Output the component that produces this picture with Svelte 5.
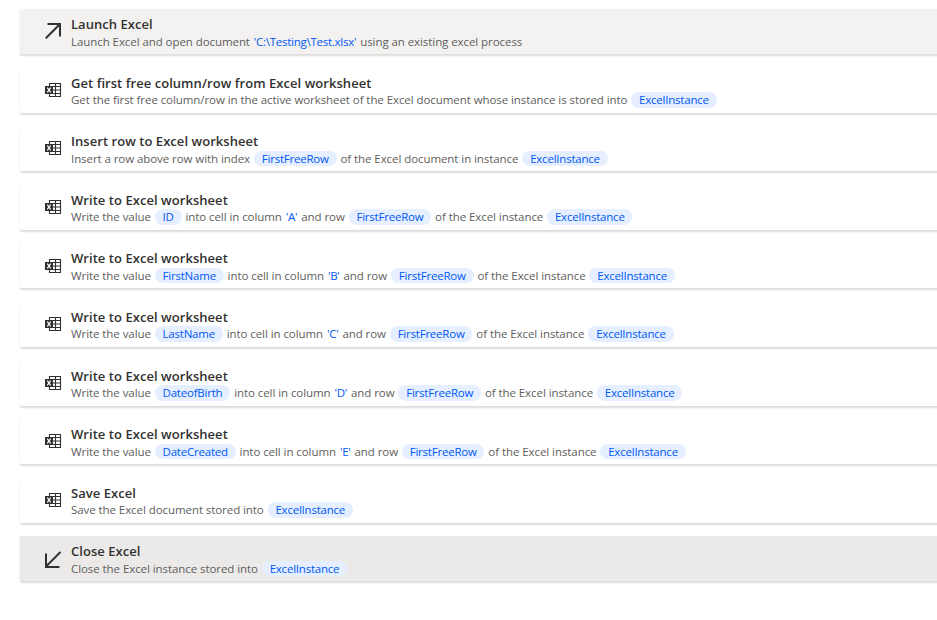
<script>
  const excel = { variable: 'ExcelInstance' };
  const freeRow = { variable: 'FirstFreeRow' };

  function writeAction(variable, column) {
    return {
      title: 'Write to Excel worksheet',
      icon: 'sheet',
      parts: [
        'Write the value ',
        { variable },
        ' into cell in column ',
        { value: `'${column}'` },
        ' and row ',
        freeRow,
        ' of the Excel instance ',
        excel,
      ],
    };
  }

  const actions = [
    {
      title: 'Launch Excel',
      icon: 'launch',
      parts: [
        'Launch Excel and open document ',
        { value: "'C:\\Testing\\Test.xlsx'" },
        ' using an existing excel process',
      ],
    },
    {
      title: 'Get first free column/row from Excel worksheet',
      icon: 'sheet',
      parts: [
        'Get the first free column/row in the active worksheet of the Excel document whose instance is stored into ',
        excel,
      ],
    },
    {
      title: 'Insert row to Excel worksheet',
      icon: 'sheet',
      parts: [
        'Insert a row above row with index ',
        freeRow,
        ' of the Excel document in instance ',
        excel,
      ],
    },
    writeAction('ID', 'A'),
    writeAction('FirstName', 'B'),
    writeAction('LastName', 'C'),
    writeAction('DateofBirth', 'D'),
    writeAction('DateCreated', 'E'),
    {
      title: 'Save Excel',
      icon: 'sheet',
      parts: ['Save the Excel document stored into ', excel],
    },
    {
      title: 'Close Excel',
      icon: 'close',
      parts: ['Close the Excel instance stored into ', excel],
    },
  ];
</script>

<main class="flow">
  {#each actions as action}
    <article class="action {action.icon}">
      <svg class="icon" viewBox="0 0 18 18" aria-hidden="true">
        {#if action.icon === 'launch'}
          <path class="arrow" d="M2.5 2H15V14.5M15 2L0.8 16.2" />
        {:else if action.icon === 'close'}
          <path class="arrow" d="M15.5 2L1 16.5M1 3.5V17H14.5" />
        {:else}
          <path class="grid" d="M4.5 5V2.5H15.5V15.5H4.5V13M8 5.5H15.5M8 9H15.5M8 12.5H15.5M10.5 2.5V15.5" />
          <rect class="badge" x="0" y="5" width="8" height="8" />
          <path class="cross" d="M2.3 6.7L5.7 11.3M5.7 6.7L2.3 11.3" />
        {/if}
      </svg>
      <div class="text">
        <h2>{action.title}</h2>
        <p>{#each action.parts as part}{#if part.variable}<span class="variable">{part.variable}</span>{:else if part.value}<span class="value">{part.value}</span>{:else}{part}{/if}{/each}</p>
      </div>
    </article>
  {/each}
</main>

<style>
  :global(body) {
    margin: 0;
    background: #fff;
  }

  .flow {
    display: flex;
    flex-direction: column;
    gap: 13.6px;
    height: 620px;
    box-sizing: border-box;
    padding: 9px 0 0 20px;
    overflow: hidden;
    font-family: 'Open Sans', 'Noto Sans', sans-serif;
  }

  .action {
    display: flex;
    flex: none;
    height: 45px;
    margin-right: -6px;
    background: #fff;
    border-radius: 2px;
    box-shadow: 0 1.5px 2px rgba(0, 0, 0, 0.14);
  }

  .launch {
    background: #f3f2f1;
  }

  .close {
    background: #ebeae9;
  }

  .icon {
    flex: none;
    width: 18px;
    height: 18px;
    margin: 13.2px 8px 0 25px;
    overflow: visible;
    fill: none;
    stroke: #323130;
  }

  .arrow {
    stroke-width: 2;
  }

  .grid {
    stroke-width: 1.1;
  }

  .badge {
    fill: #323130;
    stroke: none;
  }

  .cross {
    stroke: #fff;
    stroke-width: 1.2;
  }

  .text {
    display: flex;
    flex-direction: column;
  }

  h2 {
    margin: 6px 0 0.5px;
    font-size: 13px;
    font-weight: 600;
    line-height: 18px;
    letter-spacing: 0.05px;
    color: #323130;
  }

  p {
    margin: 0;
    font-size: 11.5px;
    line-height: 16px;
    letter-spacing: -0.07px;
    white-space: pre;
    color: #605e5c;
  }

  .value {
    padding: 0 1px;
    letter-spacing: -0.26px;
    color: #0058f5;
  }

  .variable {
    display: inline-block;
    margin: 0 1px;
    padding: 0 7.8px;
    border-radius: 8px;
    line-height: 15.5px;
    letter-spacing: -0.22px;
    color: #0058f5;
    background: #e5efff;
  }
</style>
